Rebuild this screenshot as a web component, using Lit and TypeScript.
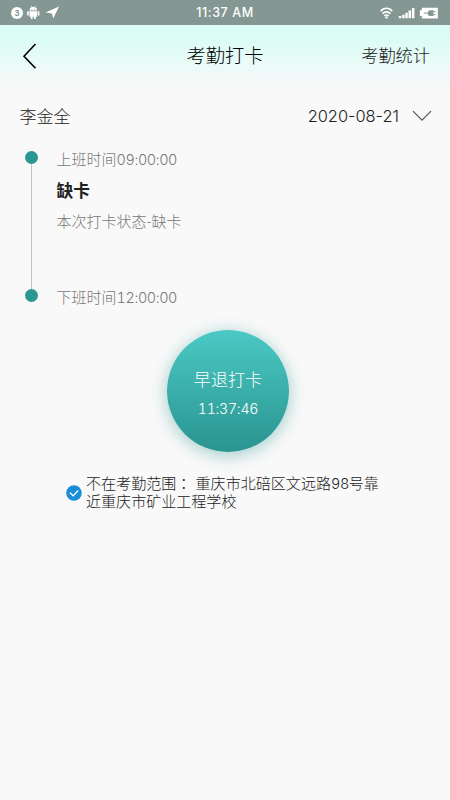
import { LitElement, html, css } from "lit";
import { customElement } from "lit/decorators.js";

@customElement("app-root")
export class AppRoot extends LitElement {
  static styles = css`
    :host {
      display: block;
      height: 800px;
      background: #f9f9f9;
      color: #444;
      font-family: "Noto Sans CJK SC", sans-serif;
      font-weight: 300;
      white-space: nowrap;
      overflow: hidden;
    }
    svg { display: block; flex: none; fill: none; }
    .status {
      height: 25px;
      background: #849792;
      color: #fff;
      display: grid;
      grid-template-columns: 1fr auto 1fr;
      align-items: center;
      font: 500 12.5px/25px Inter, "Liberation Sans", sans-serif;
      letter-spacing: 0.6px;
    }
    .left { padding-left: 10px; }
    .right { justify-self: end; padding-right: 12px; }
    .badge { font: 700 9px "Liberation Sans", sans-serif; }
    .head {
      height: 63px;
      background: linear-gradient(#dafdf6 0, #dcfcf6 25%, #f9f9f9 100%);
      display: grid;
      grid-template-columns: 1fr auto 1fr;
      align-items: center;
      box-sizing: border-box;
      padding: 0 20px 1px;
    }
    .title { font-size: 19.3px; line-height: 28px; color: #000; padding-bottom: 2px; }
    .link { font-size: 17.2px; line-height: 26px; color: #222; justify-self: end; padding-bottom: 2px; }
    .row {
      display: flex;
      justify-content: space-between;
      align-items: center;
      height: 26px;
      margin-top: 14px;
      padding: 0 18px 0 19.5px;
      font-size: 17px;
      color: #222;
    }
    .date { display: flex; align-items: center; gap: 13px; }
    .date, .num, .clock {
      font-family: Inter, "Liberation Sans", sans-serif;
      font-variant-numeric: tabular-nums;
      font-weight: 300;
    }
    .date {
      font-size: 16.4px;
      font-variant-numeric: normal;
      line-height: 26px;
      padding-top: 1px;
    }
    .timeline { display: flex; padding: 23px 25px 0 24px; height: 151px; }
    .rail { display: flex; flex-direction: column; align-items: center; width: 14px; }
    .dot { width: 13px; height: 13px; border-radius: 50%; background: #2b9792; }
    .line { width: 1px; height: 125px; background: #c4c4c4; }
    .entries { padding-left: 18.6px; color: #777; font-size: 15px; line-height: 22px; margin-top: -3px; }
    .num { font-size: 14.4px; letter-spacing: -0.4px; line-height: 0; }
    .state { font-size: 16.7px; font-weight: 700; line-height: 26px; color: #222; margin-top: 7px; }
    .note { margin-top: 7px; }
    .off { margin-top: 54px; }
    .punch {
      width: 122px;
      height: 122px;
      margin: 28px 0 0 167px;
      border-radius: 50%;
      background: linear-gradient(#4bc9c4, #2a9490);
      box-shadow: 0 3px 16px 1px rgba(42, 148, 144, 0.4);
      color: #fff;
      text-align: center;
      box-sizing: border-box;
      padding-top: 36px;
    }
    .act { font-size: 17.1px; line-height: 26px; }
    .clock { font-size: 14.2px; line-height: 20px; margin-top: 7px; letter-spacing: -0.3px; }
    .place {
      display: flex;
      align-items: center;
      gap: 4px;
      margin-top: 23px;
      padding-left: 66px;
      font-family: Inter, "Noto Sans CJK SC", sans-serif;
      font-size: 15.05px;
      line-height: 18px;
      color: #222;
    }
    .colon { font-family: Inter, "Noto Sans CJK TC", sans-serif; }
  `;

  render() {
    return html`
      <div class="status">
        <svg class="left" width="52" height="16" viewBox="0 0 52 16">
          <circle cx="7" cy="8" r="6" fill="#fff" />
          <text class="badge" x="4.5" y="11.2" fill="#849792">3</text>
          <path d="M19.5 5.6a3.8 3.8 0 0 1 7.6 0zM19.5 6.3h7.6v5.5h-7.6zM17.2 6.3h1.6v4.2h-1.6zM27.8 6.3h1.6v4.2h-1.6zM20.8 11.5h1.8V14h-1.8zM24 11.5h1.8V14H24zM20.6 1.1l.6-.4 1 1.8h-.6zM26 1.1l-.6-.4-1 1.8h.6z" fill="#fff" />
          <path d="M21.4 4h.9v.8h-.9zM24.3 4h.9v.8h-.9z" fill="#849792" />
          <path d="M49 1.5 43.3 13.5 41.8 8.6 35.6 7.4z" fill="#fff" />
        </svg>
        <span>11:37 AM</span>
        <svg class="right" width="60" height="16" viewBox="0 0 60 16">
          <g stroke="#fff" stroke-width="1.6">
            <path d="M2.8 6.2a7 7 0 0 1 11.4 0M4.6 8.7a5 5 0 0 1 7.8 0M6.4 10.9a2.8 2.8 0 0 1 4.2 0" />
          </g>
          <circle cx="8.5" cy="12.4" r="1.2" fill="#fff" />
          <path d="M20.8 11h2.5v2.3h-2.5zM24.1 9.8h2.5v3.5h-2.5zM27.3 7.8h2.5v5.5h-2.5zM30.5 5.5H33v7.8h-2.5zM33.9 2.9h2.5v10.4h-2.5zM43.8 2.8h16v10.6h-16V11h-1.9V5.3h1.9z" fill="#fff" />
          <path d="M45.8 8.1h4M55.5 6.7h2M55.5 9.6h2" stroke="#849792" />
          <path d="M55.5 5.3v5.7h-2.7a3 2.8 0 0 1 0-5.7z" fill="#849792" />
        </svg>
      </div>
      <div class="head">
        <svg width="20" height="28" viewBox="0 0 20 28">
          <path d="M15.5 2 4 14.3 15.5 26.2" stroke="#000" stroke-width="1.6" />
        </svg>
        <span class="title">考勤打卡</span>
        <span class="link">考勤统计</span>
      </div>
      <div class="row">
        <span>李金全</span>
        <span class="date">2020-08-21
          <svg width="20" height="12" viewBox="0 0 20 12">
            <path d="m1 1.2 9 9 9-9" stroke="#555" stroke-width="1.2" />
          </svg>
        </span>
      </div>
      <div class="timeline">
        <div class="rail">
          <div class="dot"></div>
          <div class="line"></div>
          <div class="dot"></div>
        </div>
        <div class="entries">
          <div>上班时间<span class="num">09:00:00</span></div>
          <div class="state">缺卡</div>
          <div class="note">本次打卡状态-缺卡</div>
          <div class="off">下班时间<span class="num">12:00:00</span></div>
        </div>
      </div>
      <div class="punch">
        <div class="act">早退打卡</div>
        <div class="clock">11:37:46</div>
      </div>
      <div class="place">
        <svg width="16" height="16" viewBox="0 0 16 16">
          <circle cx="8" cy="8" r="7.8" fill="#1a8fd8" />
          <path d="m4 7.8 3.2 3L12.2 5.5" stroke="#fff" stroke-width="1.3" />
        </svg>
        <div>不在考勤范围<span class="colon">：</span> 重庆市北碚区文远路<span class="num">98</span>号靠<br />近重庆市矿业工程学校</div>
      </div>
    `;
  }
}
